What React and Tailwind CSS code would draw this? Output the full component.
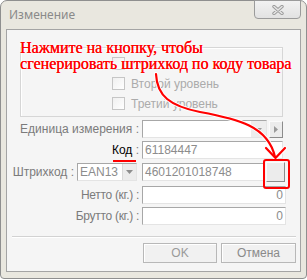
import React from "react";

// shared looks for the old-style win32 controls
const sans = "font-['Liberation_Sans',Arial,sans-serif]";
const narrow = "font-['Liberation_Sans_Narrow','Liberation_Sans',Arial,sans-serif]";
const sunken =
  "bg-white border border-t-[#a7a7a7] border-l-[#a7a7a7] border-b-[#e4e4e4] border-r-[#e4e4e4]";
const raised =
  "bg-[#ececec] border border-t-[#fbfbfb] border-l-[#fbfbfb] border-b-[#8c8c8c] border-r-[#8c8c8c]";

function CheckRow({ text }) {
  return (
    <div className="flex items-center h-[13px] gap-[6px]">
      <div className="w-[13px] h-[13px] border border-[#c6c6c6] bg-gradient-to-br from-[#f0f0f0] to-white" />
      {text && <span className={`${sans} text-[12px] leading-none text-[#ababab]`}>{text}</span>}
    </div>
  );
}

function DownArrow({ color = "#8a8a8a" }) {
  return (
    <svg width="7" height="4" viewBox="0 0 7 4">
      <path d="M0 0 L7 0 L3.5 4 Z" fill={color} />
    </svg>
  );
}

export default function App() {
  return (
    <div className="relative w-[307px] h-[280px] bg-white overflow-hidden">
      {/* Window frame */}
      <div className="w-[307px] h-[279px] rounded-t-[7px] rounded-b-[4px] border border-[#8f8f8f] bg-[#e9e7df] flex flex-col">
        {/* Title bar */}
        <div className="h-[28px] flex items-start justify-between pl-[8px] pr-[5px]">
          <span className="mt-[7px] font-['Noto_Sans',sans-serif] text-[12px] leading-[14px] text-[#8a8a8a]">
            Изменение
          </span>
          <div className="-mt-px w-[47px] h-[19px] rounded-b-[4px] border border-[#9b9b9b] bg-gradient-to-b from-[#f2f2f2] to-[#e2e2e2] flex items-center justify-center">
            <svg width="12" height="10" viewBox="0 0 12 10">
              <path d="M2 1.5 L10 8.5 M10 1.5 L2 8.5" stroke="#9a9a9a" strokeWidth="3.4" strokeLinecap="round" />
              <path d="M2 1.5 L10 8.5 M10 1.5 L2 8.5" stroke="#e6e6e6" strokeWidth="1.6" strokeLinecap="round" />
            </svg>
          </div>
        </div>

        {/* Client area */}
        <div className="flex-1 mx-[5px] mb-[6px] border border-[#a4a4a4] bg-[#f5f5f5] flex flex-col">
          {/* Group box with levels (first label is hidden under the hint) */}
          <div className="mt-[17px] ml-[13px] w-[263px] h-[70px] border border-[#d6d6d6] shadow-[inset_1px_1px_0_#ffffff] pt-[9px] pl-[91px] flex flex-col gap-[7px]">
            <CheckRow />
            <CheckRow text="Второй уровень" />
            <CheckRow text="Третий уровень" />
          </div>

          {/* Единица измерения */}
          <div className="mt-[3px] flex items-center h-[18px]">
            <div className={`w-[132px] text-right whitespace-nowrap ${sans} text-[12px] text-[#7b7b7b]`}>Единица измерения :</div>
            <div className={`ml-[3px] w-[125px] h-[18px] ${sunken} flex justify-end`}>
              <div className="w-[15px] h-full bg-[#ededed] flex items-end justify-center pb-[5px]">
                <DownArrow color="#9a9a9a" />
              </div>
            </div>
            <div className={`ml-[2px] w-[14px] h-[17px] ${raised} flex items-center justify-center`}>
              <svg width="4" height="7" viewBox="0 0 4 7">
                <path d="M0 0 L4 3.5 L0 7 Z" fill="#9a9a9a" />
              </svg>
            </div>
          </div>

          {/* Код */}
          <div className="mt-[3px] flex items-center h-[18px]">
            <div className={`w-[132px] text-right ${sans} text-[12px] text-black`}>
              Код <span className="text-[#7b7b7b]">:</span>
            </div>
            <div className={`ml-[3px] w-[141px] h-[18px] ${sunken} ${sans} text-[12px] leading-[16px] pl-[2px] text-[#8c8c8c]`}>
              61184447
            </div>
          </div>

          {/* Штрихкод */}
          <div className="mt-[4px] flex items-center h-[18px]">
            <div className="w-[132px] pr-[2px] flex items-center justify-end gap-[3px]">
              <span className={`whitespace-nowrap ${sans} text-[12px] text-[#7b7b7b]`}>Штрихкод :</span>
              <div className={`w-[60px] h-[18px] shrink-0 ${sunken} flex items-center`}>
                <span className={`flex-1 pl-[2px] ${sans} text-[12px] text-[#8c8c8c]`}>EAN13</span>
                <div className="w-[14px] h-full bg-[#ececec] border-l border-[#dadada] flex items-center justify-center">
                  <DownArrow color="#8e8e8e" />
                </div>
              </div>
            </div>
            <div className={`ml-[3px] w-[123px] h-[18px] ${sunken} ${sans} text-[12px] leading-[16px] pl-[2px] text-[#8c8c8c]`}>
              4601201018748
            </div>
            <div className={`ml-[1px] w-[19px] h-[20px] ${raised}`} />
          </div>

          {/* Нетто */}
          <div className="mt-[5px] flex items-center h-[18px]">
            <div className={`w-[132px] text-right ${narrow} text-[12px] tracking-[-0.3px] text-[#7b7b7b]`}>Нетто (кг.) :</div>
            <div className={`ml-[3px] w-[144px] h-[18px] ${sunken} ${narrow} text-[12px] leading-[16px] pr-[2px] text-right text-[#8c8c8c]`}>
              0
            </div>
          </div>

          {/* Брутто */}
          <div className="mt-[3px] flex items-center h-[18px]">
            <div className={`w-[132px] text-right ${narrow} text-[12px] tracking-[-0.3px] text-[#7b7b7b]`}>Брутто (кг.) :</div>
            <div className={`ml-[3px] w-[144px] h-[18px] ${sunken} ${narrow} text-[12px] leading-[16px] pr-[2px] text-right text-[#8c8c8c]`}>
              0
            </div>
          </div>

          {/* Separator */}
          <div className="mt-[11px] ml-[5px] w-[284px] border-t border-[#d2d2d2] border-b border-b-white" />

          {/* Buttons */}
          <div className="mt-[5px] pl-[136px] flex gap-[4px]">
            <div className={`w-[74px] h-[20px] border border-[#b8b8b8] bg-[#f1f1f1] shadow-[inset_1px_1px_0_#ffffff] flex items-center justify-center ${narrow} text-[12px] text-[#9a9a9a]`}>
              OK
            </div>
            <div className={`w-[75px] h-[20px] border border-[#b8b8b8] bg-[#f1f1f1] shadow-[inset_1px_1px_0_#ffffff] flex items-center justify-center ${narrow} text-[12px] text-[#8a8a8a]`}>
              Отмена
            </div>
          </div>
        </div>
      </div>

      {/* Annotation: hint text over the dialog */}
      <div className="absolute left-[20px] top-[40px] whitespace-nowrap font-['Liberation_Serif',serif] text-[16px] leading-[16px] text-[#ff0000] [text-shadow:0.3px_0_0_#ff0000,0_0_2px_#fff,0_0_3px_#fff,0_0_4px_#fff]">
        <div>Нажмите на кнопку, чтобы</div>
        <div>сгенерировать штрихкод по коду товара</div>
      </div>

      {/* Annotation: arrow */}
      <svg className="absolute left-0 top-0 pointer-events-none" width="307" height="280" viewBox="0 0 307 280">
        <path d="M156 74 C157 96 170 106 200 112 C238 119 268 126 275 157" fill="none" stroke="#ffffff" strokeWidth="4" strokeLinecap="round" />
        <path d="M266 148 L275.5 158 L285 148" fill="none" stroke="#ffffff" strokeWidth="4" strokeLinecap="round" strokeLinejoin="round" />
        <path d="M156 74 C157 96 170 106 200 112 C238 119 268 126 275 157" fill="none" stroke="#ff0000" strokeWidth="2.2" strokeLinecap="round" />
        <path d="M266 148 L275.5 158 L285 148" fill="none" stroke="#ff0000" strokeWidth="2.2" strokeLinecap="round" strokeLinejoin="round" />
      </svg>

      {/* Annotation: underline under Код */}
      <div className="absolute left-[113px] top-[160px] w-[23px] h-[2px] bg-[#ff0000]" />

      {/* Annotation: frame round the barcode button */}
      <div className="absolute left-[263px] top-[159px] w-[27px] h-[30px] border-2 border-[#ff0000] rounded-[3px]" />
    </div>
  );
}
